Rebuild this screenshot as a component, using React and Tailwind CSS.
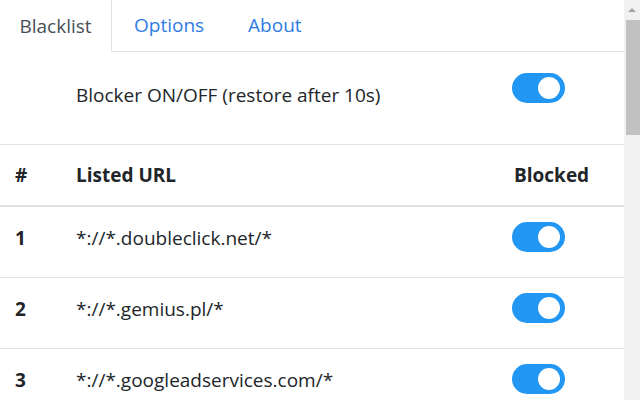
import React from "react";

const urls = [
  "*://*.doubleclick.net/*",
  "*://*.gemius.pl/*",
  "*://*.googleadservices.com/*",
];

function Toggle() {
  return (
    <div className="relative w-[53px] h-[30px] rounded-full bg-[#2196f3]">
      <div className="absolute right-[5px] top-[4px] w-[22px] h-[22px] rounded-full bg-white" />
    </div>
  );
}

export default function App() {
  return (
    <div
      className="flex w-[640px] h-[400px] overflow-hidden bg-white text-[#212529]"
      style={{ fontFamily: '"Open Sans", "Noto Sans", sans-serif' }}
    >
      <div className="w-[624px] flex flex-col">
        {/* tabs */}
        <div className="flex shrink-0 h-[52px] border-b border-[#dee2e6] text-[19px]">
          <div className="w-[112px] h-[52px] -mb-px bg-white border-r border-[#dee2e6] flex items-center justify-center text-[#495057]">
            Blacklist
          </div>
          <div className="px-[22px] flex items-center text-[#2f7be5]">Options</div>
          <div className="px-[22px] flex items-center text-[#2f7be5]">About</div>
        </div>

        {/* blocker switch */}
        <div className="flex shrink-0 h-[93px] border-b border-[#dee2e6] text-[19px]">
          <div className="w-[76px]" />
          <div className="flex-1 pt-[29px]">Blocker ON/OFF (restore after 10s)</div>
          <div className="w-[112px] pt-[21px]">
            <Toggle />
          </div>
        </div>

        {/* table header */}
        <div className="flex shrink-0 h-[62px] items-center border-b-2 border-[#dee2e6] font-bold text-[19px]">
          <div className="w-[76px] pl-[15px]">#</div>
          <div className="flex-1">Listed URL</div>
          <div className="w-[112px] pl-[2px]">Blocked</div>
        </div>

        {urls.map((url, i) => (
          <div key={url} className="flex h-[71px] shrink-0 items-start border-b border-[#dee2e6] text-[19px] leading-[28px]">
            <div className="w-[76px] pl-[15px] pt-[17px] font-bold">{i + 1}</div>
            <div className="flex-1 pt-[17px]">{url}</div>
            <div className="w-[112px] pt-[15px]">
              <Toggle />
            </div>
          </div>
        ))}
      </div>

      {/* scrollbar */}
      <div className="w-[16px] bg-[#f1f1f1] flex flex-col items-center">
        <div className="h-[20px] flex items-center justify-center">
          <div className="w-0 h-0 border-l-[4px] border-r-[4px] border-b-[4px] border-l-transparent border-r-transparent border-b-[#a3a3a3]" />
        </div>
        <div className="w-[14px] ml-[2px] h-[115px] bg-[#c1c1c1]" />
      </div>
    </div>
  );
}
